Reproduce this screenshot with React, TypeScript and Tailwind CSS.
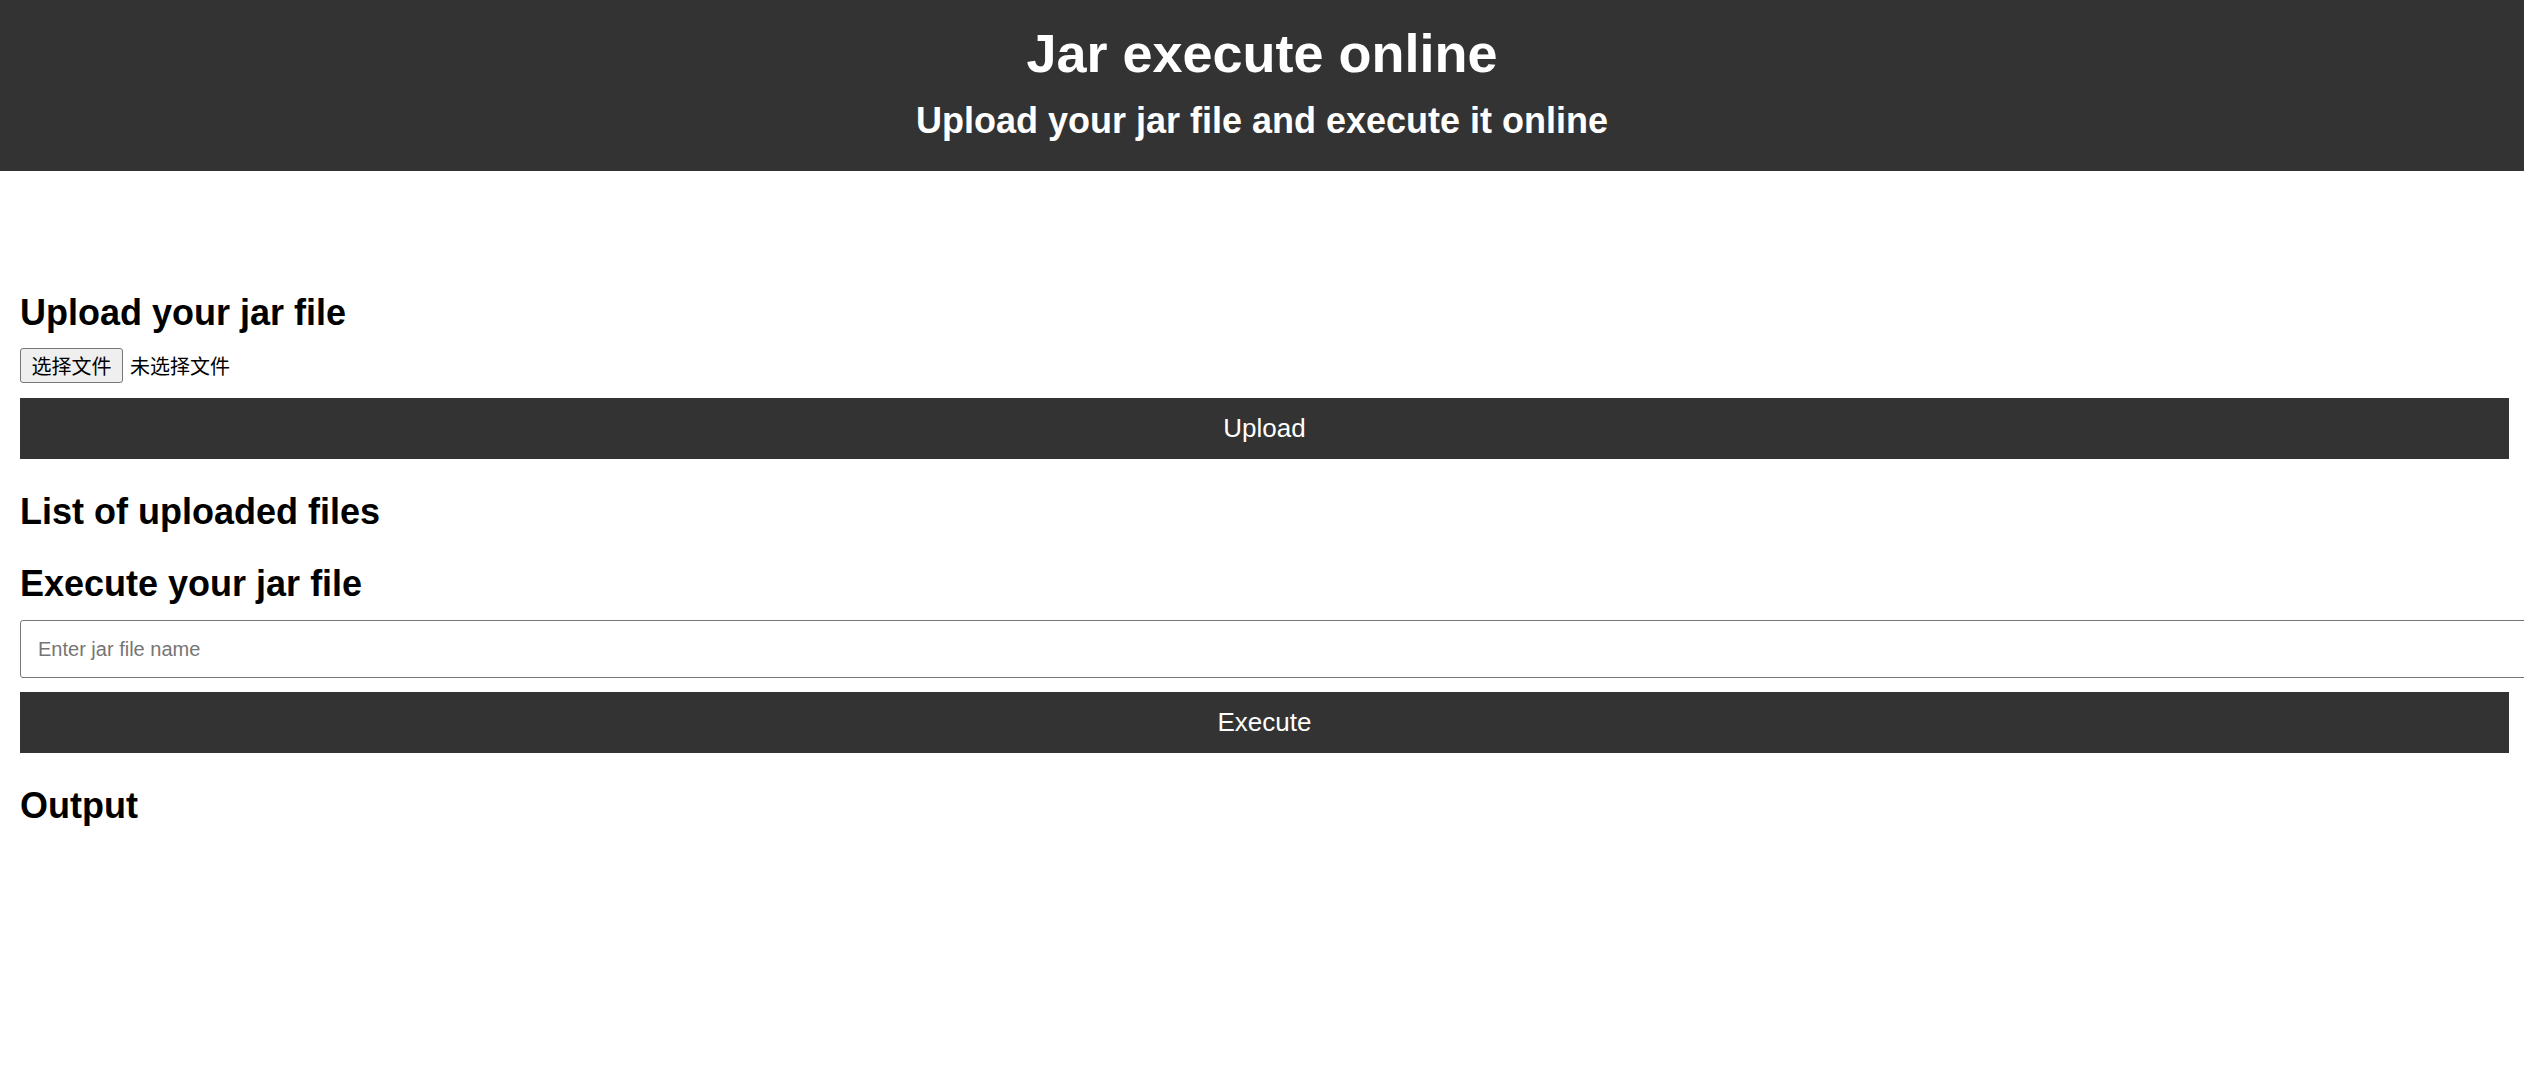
import React from "react";

export default function App() {
  return (
    <div
      className="min-h-screen w-full overflow-hidden bg-white text-black"
      style={{ fontFamily: '"Liberation Sans", Arial, "Noto Sans CJK SC", sans-serif' }}
    >
      <header className="w-full bg-[#333333] pt-[22px] pb-[30px] text-center text-white">
        <h1 className="m-0 text-[54px] font-bold leading-[62px]">Jar execute online</h1>
        <h2 className="m-0 mt-[16px] text-[36px] font-bold leading-[41px]">
          Upload your jar file and execute it online
        </h2>
      </header>

      <main className="pl-5 pr-[15px]">
        <section className="mt-[121px]">
          <h2 className="text-[36px] font-bold leading-[41px]">Upload your jar file</h2>
          <div className="mt-[15px] flex h-[35px] items-center">
            <button
              type="button"
              className="flex h-[35px] w-[103px] items-center justify-center rounded-[3px] border border-[#767676] bg-[#efefef] text-[20px] leading-none text-black"
              style={{ fontFamily: '"Noto Sans CJK SC", "Liberation Sans", sans-serif' }}
            >
              选择文件
            </button>
            <span
              className="ml-[7px] text-[20px] leading-none"
              style={{ fontFamily: '"Noto Sans CJK SC", "Liberation Sans", sans-serif' }}
            >
              未选择文件
            </span>
          </div>
          <button
            type="button"
            className="mt-[15px] flex h-[61px] w-full items-center justify-center bg-[#333333] text-[26px] text-white"
          >
            Upload
          </button>
        </section>

        <section className="mt-[32px]">
          <h2 className="text-[36px] font-bold leading-[41px]">List of uploaded files</h2>
        </section>

        <section className="mt-[31px]">
          <h2 className="text-[36px] font-bold leading-[41px]">Execute your jar file</h2>
          <input
            type="text"
            placeholder="Enter jar file name"
            className="mt-[16px] block h-[58px] w-[calc(100%+40px)] rounded-[3px] border border-[#767676] bg-white px-[17px] text-[20px] text-black outline-none placeholder:text-[#757575]"
            style={{ fontFamily: '"Liberation Sans", Arial, sans-serif' }}
          />
          <button
            type="button"
            className="mt-[14px] flex h-[61px] w-full items-center justify-center bg-[#333333] text-[26px] text-white"
          >
            Execute
          </button>
        </section>

        <section className="mt-[32px]">
          <h2 className="text-[36px] font-bold leading-[41px]">Output</h2>
        </section>
      </main>
    </div>
  );
}
